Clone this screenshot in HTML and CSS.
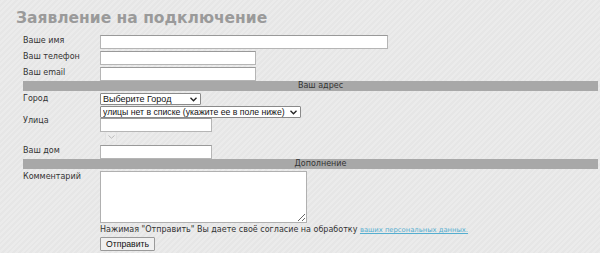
FILE: index.html
```html
<!DOCTYPE html>
<html>
<head>
	<title>Заявление на подключение</title>
	<link rel="stylesheet" href="styles.css">
</head>
<body>
	<h1>Заявление на подключение</h1>

	<form class="order">
		<div class="row">
			<label class="lbl">Ваше имя</label>
			<input type="text" class="inp wide">
		</div>
		<div class="row">
			<label class="lbl">Ваш телефон</label>
			<input type="text" class="inp">
		</div>
		<div class="row">
			<label class="lbl">Ваш email</label>
			<input type="text" class="inp">
		</div>

		<div class="bar">Ваш адрес</div>

		<div class="row first">
			<label class="lbl lbl-sel">Город</label>
			<span class="sel city">
				<select>
					<option>Выберите Город</option>
				</select>
				<svg class="arrow" width="7" height="5" viewBox="0 0 7 5"><path d="M0.5 0.8 L3.5 3.8 L6.5 0.8" fill="none" stroke="#222" stroke-width="1.3"/></svg>
			</span>
		</div>
		<div class="row">
			<label class="lbl lbl-mid">Улица</label>
			<div class="stack">
				<span class="sel street">
					<select>
						<option>улицы нет в списке (укажите ее в поле ниже)</option>
					</select>
					<svg class="arrow" width="7" height="5" viewBox="0 0 7 5"><path d="M0.5 0.8 L3.5 3.8 L6.5 0.8" fill="none" stroke="#222" stroke-width="1.3"/></svg>
				</span>
				<input type="text" class="inp short">
				<span class="stub">
					<svg width="7" height="4" viewBox="0 0 7 4"><path d="M0.5 0.5 L3.5 3.2 L6.5 0.5" fill="none" stroke="#bbb" stroke-width="1"/></svg>
				</span>
			</div>
		</div>
		<div class="row">
			<label class="lbl">Ваш дом</label>
			<input type="text" class="inp short">
		</div>

		<div class="bar">Дополнение</div>

		<div class="row first">
			<label class="lbl">Комментарий</label>
			<div class="stack">
				<textarea class="comment"></textarea>
				<p class="note">Нажимая "Отправить" Вы даете своё согласие на обработку <a href="#">ваших персональных данных.</a></p>
				<button type="button" class="btn">Отправить</button>
			</div>
		</div>
	</form>
</body>
</html>
```

FILE: styles.css
```css
body {
	margin: 0;
	padding: 10px 2px 0 16px;
	background-color: #e9e9e9;
	background-image: repeating-linear-gradient(-45deg, #ebebeb 0, #ebebeb 2px, #e6e6e6 2px, #e6e6e6 4px);
	font-family: "DejaVu Sans", Verdana, sans-serif;
	font-size: 8px;
	color: #333;
	height: 253px;
	box-sizing: border-box;
	overflow: hidden;
}
h1 {
	margin: 0 0 8px 0;
	font-size: 15.5px;
	font-weight: bold;
	color: #9a9a9a;
	line-height: 17px;
}
.order {
	margin-left: 7px;
}
.row {
	display: flex;
	align-items: flex-start;
	margin-bottom: 2px;
}
.row.first {
	margin-top: 2px;
}
.lbl {
	width: 77px;
	flex-shrink: 0;
	line-height: 11px;
}
.lbl-sel {
	line-height: 12px;
}
.lbl-mid {
	padding-top: 8px;
}
.inp {
	display: block;
	width: 156px;
	height: 14px;
	margin: 0;
	padding: 0 2px;
	box-sizing: border-box;
	border: 1px solid #b5b5b5;
	border-top-color: #999;
	background: #fff;
}
.inp.wide {
	width: 288px;
}
.inp.short {
	width: 112px;
}
.bar {
	background-color: #a8a8a8;
	color: #333;
	text-align: center;
	height: 10px;
	line-height: 10px;
	padding-left: 20px;
	margin-top: -2px;
}
.stack {
	display: flex;
	flex-direction: column;
	align-items: flex-start;
}
.sel {
	position: relative;
	display: block;
	height: 12px;
}
.sel select {
	appearance: none;
	-webkit-appearance: none;
	display: block;
	width: 100%;
	height: 12px;
	margin: 0;
	padding: 0 12px 0 2px;
	font-family: "Liberation Sans", Arial, sans-serif;
	font-size: 9px;
	line-height: 10px;
	color: #111;
	background: #fff;
	border: 1px solid #8a8a8a;
	border-radius: 1px;
	box-sizing: border-box;
}
.sel .arrow {
	position: absolute;
	right: 4px;
	top: 4px;
}
.city {
	width: 101px;
}
.street {
	width: 201px;
	margin-top: -1px;
}
.street select {
	font-size: 8.7px;
}
.stub {
	display: flex;
	align-items: center;
	justify-content: center;
	width: 10px;
	height: 8px;
	margin: 1px 0 2px 5px;
	border-left: 1px solid #e2e2e2;
	border-right: 1px solid #e2e2e2;
	background: #ececec;
}
.comment {
	display: block;
	width: 207px;
	height: 52px;
	margin: 0;
	box-sizing: border-box;
	border: 1px solid #b0b0b0;
	background: #fff;
}
.note {
	margin: 1px 0 1px 0;
	white-space: nowrap;
	line-height: 11px;
}
.note a {
	color: #55aed0;
	font-size: 6.8px;
}
.btn {
	margin: 0;
	height: 14px;
	padding: 0 5px;
	font-family: "Liberation Sans", Arial, sans-serif;
	font-size: 8.7px;
	line-height: 12px;
	color: #111;
	background: #f0f0f0;
	border: 1px solid #9a9a9a;
	border-radius: 1px;
}
```
